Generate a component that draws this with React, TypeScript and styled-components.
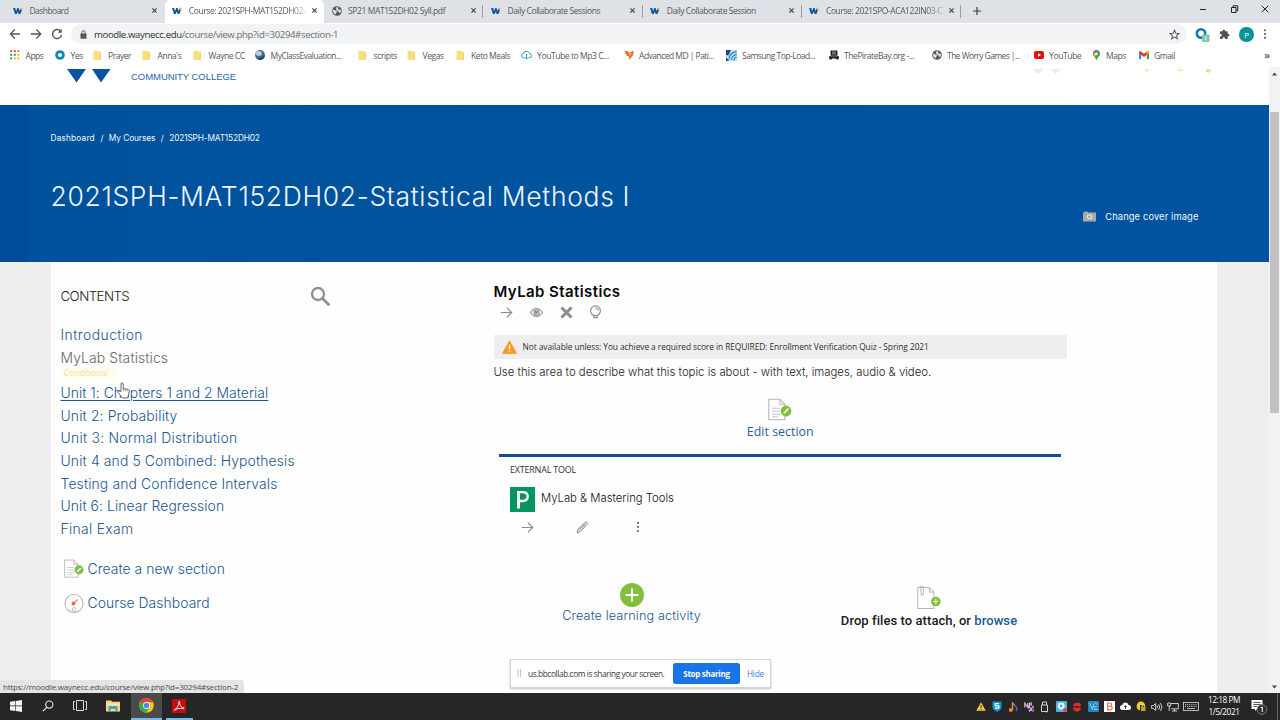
import React from 'react';
import styled, { createGlobalStyle, css } from 'styled-components';

const GlobalStyle = createGlobalStyle`
  * { box-sizing: border-box; }
  body { margin: 0; overflow: hidden; background: #fff; }
  svg { display: block; flex: none; }
`;

const ui = css`font-family: "Open Sans", "Noto Sans", sans-serif;`;
const geo = css`font-family: "Inter", sans-serif;`;

const Screen = styled.div`
  ${geo}
  position: relative;
  width: 1280px;
  height: 720px;
  display: flex;
  flex-direction: column;
  overflow: hidden;
  background: #fff;
`;

/* ---------- Browser chrome ---------- */

const TabStrip = styled.div`
  ${ui}
  display: flex;
  height: 22.5px;
  flex: none;
  padding-left: 5.5px;
  background: #dee1e6;
  font-size: 8.5px;
  color: #555a60;
`;

const Tab = styled.div<{ $active?: boolean; $divider?: boolean }>`
  position: relative;
  display: flex;
  align-items: center;
  width: 159.3px;
  flex: none;
  padding: 0 7.5px 1px 7.5px;
  background: ${p => (p.$active ? '#fff' : 'transparent')};
  border-radius: 5px 5px 0 0;
  &::after {
    content: '';
    position: absolute;
    right: 0;
    top: 5px;
    height: 13px;
    width: 1px;
    background: ${p => (p.$divider ? '#9a9da2' : 'transparent')};
  }
`;

const TabTitle = styled.span<{ $fade?: boolean; $spacing?: number }>`
  flex: 1;
  margin-left: 6.5px;
  white-space: nowrap;
  letter-spacing: ${p => p.$spacing ?? -0.42}px;
  ${p => p.$fade && css`
    mask-image: linear-gradient(90deg, #000 100px, rgba(0, 0, 0, 0.3) 117px);
  `}
`;

const NewTab = styled.div`
  display: flex;
  align-items: center;
  margin-left: 12px;
`;

const WindowControls = styled.div`
  display: flex;
  align-items: center;
  gap: 22.5px;
  height: 18px;
  margin-left: auto;
  padding-right: 11px;
`;

const Toolbar = styled.div`
  ${ui}
  display: flex;
  align-items: center;
  height: 23.5px;
  flex: none;
  padding: 0 13px 0 9px;
`;

const NavIcons = styled.div`
  display: flex;
  gap: 9px;
  margin-right: 8px;
`;

const AddressBar = styled.div`
  display: flex;
  align-items: center;
  width: 1116px;
  flex: none;
  height: 20px;
  padding: 0 7px 0 8px;
  border-radius: 10px;
  background: #f1f3f4;
`;

const Url = styled.span`
  flex: 1;
  margin-left: 6px;
  font-size: 9.6px;
  letter-spacing: -0.37px;
  color: #6b6f74;
  b { font-weight: 400; color: #2d3033; }
`;

const ToolbarActions = styled.div`
  display: flex;
  align-items: center;
  flex: 1;
  justify-content: space-between;
  padding-left: 8px;
`;

const Avatar = styled.div`
  display: grid;
  place-items: center;
  width: 14.5px;
  height: 14.5px;
  border-radius: 50%;
  background: #08939b;
  color: #fff;
  font-size: 8px;
`;

const Bookmarks = styled.div`
  ${ui}
  display: flex;
  align-items: center;
  height: 21px;
  flex: none;
  padding: 0 10px 2.5px;
  font-size: 8.5px;
  color: #53575c;
`;

const Bookmark = styled.div<{ $width: number; $spacing?: number }>`
  display: flex;
  align-items: center;
  gap: 5.6px;
  width: ${p => p.$width}px;
  flex: none;
  white-space: nowrap;
  letter-spacing: ${p => (p.$spacing ?? -0.22) - 0.25}px;
`;

const More = styled.span`
  margin-left: auto;
  font-size: 11px;
  line-height: 10px;
  font-weight: 600;
`;

/* ---------- Page ---------- */

const Viewport = styled.div`
  display: flex;
  flex: 1;
  min-height: 0;
`;

const Page = styled.div`
  display: flex;
  flex-direction: column;
  width: 1269px;
`;

const SiteHeader = styled.header`
  display: flex;
  justify-content: space-between;
  height: 38px;
  flex: none;
  padding: 2px 56px 0 67px;
`;

const Brand = styled.div`
  display: flex;
  gap: 21px;
  font-family: "Liberation Sans", sans-serif;
  font-size: 9.5px;
  line-height: 15px;
  letter-spacing: -0.05px;
  color: #2864a8;
`;

const Cover = styled.section`
  display: flex;
  flex-direction: column;
  height: 157px;
  flex: none;
  padding: 27px 70.5px 0 50.5px;
  background: linear-gradient(90deg, #004b9c 0, #004b9c 26px, #00529c 34px, #00549f 100%);
  color: #eef6ff;
`;

const Breadcrumb = styled.nav`
  display: flex;
  gap: 5.6px;
  font-size: 8.3px;
  line-height: 13px;
  letter-spacing: -0.15px;
`;

const Crumb = styled.span<{ $spacing?: number }>`
  letter-spacing: ${p => p.$spacing ?? -0.15}px;
`;

const Title = styled.h1`
  margin: 34px 0 0;
  font-size: 26.5px;
  line-height: 34px;
  font-weight: 300;
  letter-spacing: 0.66px;
`;

const ChangeCover = styled.div`
  display: flex;
  align-items: center;
  align-self: flex-end;
  gap: 9px;
  margin-top: -3px;
  line-height: 13px;
  font-size: 9.3px;
  letter-spacing: 0.14px;
`;

const Body = styled.div`
  display: flex;
  flex: 1;
  padding: 0 52px 0 50.5px;
  background: #eeeeef;
`;

const Sheet = styled.div`
  display: flex;
  flex: 1;
  background: #fefefe;
`;

const Sidebar = styled.aside`
  width: 443px;
  flex: none;
  padding: 23px 0 0 10px;
`;

const ContentsHead = styled.div`
  display: flex;
  align-items: center;
  justify-content: space-between;
  width: 270px;
  height: 22px;
  margin-bottom: 17px;
  font-size: 13.3px;
  letter-spacing: -0.56px;
  font-weight: 300;
  color: #222;
`;

const TocItem = styled.a<{ $tone?: 'muted'; $hover?: boolean; $spacing?: number }>`
  display: block;
  width: 250px;
  font-size: 13.9px;
  line-height: 22.7px;
  font-weight: 300;
  letter-spacing: ${p => p.$spacing ?? 0.05}px;
  color: ${p => (p.$tone === 'muted' ? '#666' : '#21578f')};
  text-decoration: ${p => (p.$hover ? 'underline' : 'none')};
  text-decoration-thickness: 1px;
  text-underline-offset: 2px;
`;

const Conditional = styled.span`
  display: block;
  width: 56px;
  margin: -1px 0 2.4px;
  padding-left: 3px;
  border-radius: 3px;
  background: #fffdf0;
  font-size: 8.4px;
  line-height: 11px;
  letter-spacing: 0;
  color: #f6e2a4;
`;

const SideAction = styled.a<{ $top: number }>`
  display: flex;
  align-items: center;
  gap: 4px;
  height: 22px;
  margin-top: ${p => p.$top}px;
  padding-left: 3px;
  font-size: 13.9px;
  font-weight: 300;
  letter-spacing: 0.06px;
  color: #21578f;
`;

const Main = styled.main`
  width: 573.5px;
  padding-top: 18.5px;
`;

const SectionTitle = styled.h2`
  margin: 0;
  font-size: 15px;
  line-height: 22px;
  font-weight: 600;
  letter-spacing: 0.41px;
  color: #0a0a0a;
`;

const SectionTools = styled.div`
  display: flex;
  align-items: center;
  gap: 16px;
  height: 19.5px;
  padding-left: 6px;
`;

const Notice = styled.div`
  ${ui}
  display: flex;
  align-items: center;
  gap: 6px;
  height: 24px;
  margin-top: 13px;
  padding: 0 0 1px 8px;
  background: #efeeef;
  font-size: 8.4px;
  letter-spacing: -0.075px;
  color: #2e2e2e;
`;

const Description = styled.p`
  margin: 5px 0 0;
  font-size: 11.4px;
  line-height: 16px;
  font-weight: 300;
  letter-spacing: -0.01px;
  color: #222;
`;

const EditSection = styled.a`
  ${ui}
  display: flex;
  flex-direction: column;
  align-items: center;
  margin-top: 17.5px;
  font-size: 12.4px;
  line-height: 18px;
  letter-spacing: 0.02px;
  color: #2a5d97;
  svg { margin-bottom: 1.5px; }
`;

const Activity = styled.article`
  height: 107px;
  margin: 13px 6px 0 5.5px;
  padding: 7px 0 0 11px;
  border-top: 3px solid #134f8e;
`;

const ActivityKind = styled.div`
  ${ui}
  font-size: 9px;
  line-height: 12px;
  letter-spacing: -0.22px;
  color: #333;
`;

const ActivityName = styled.div`
  display: flex;
  align-items: center;
  gap: 6px;
  height: 25px;
  margin-top: 11px;
  font-size: 11.3px;
  font-weight: 300;
  color: #111;
  span { margin-top: -3px; }
`;

const ActivityTools = styled.div`
  display: flex;
  gap: 42px;
  margin-top: 8.5px;
  padding-left: 11px;
`;

const DropRow = styled.div`
  display: flex;
  padding-top: 21.5px;
`;

const CreateActivity = styled.a`
  display: flex;
  flex-direction: column;
  align-items: center;
  width: 276px;
  flex: none;
  font-size: 12.7px;
  line-height: 17px;
  font-weight: 300;
  letter-spacing: 0.12px;
  color: #21578f;
`;

const DropFiles = styled.div`
  display: flex;
  flex-direction: column;
  align-items: center;
  width: 319px;
  flex: none;
  padding-top: 2.5px;
  font-family: Roboto, sans-serif;
  font-size: 13px;
  line-height: 18px;
  font-weight: 500;
  letter-spacing: 0.07px;
  color: #1a1a1a;
  white-space: nowrap;
  svg { margin-bottom: 2px; }
  a { color: #2257a0; }
`;

const Scrollbar = styled.div`
  display: flex;
  flex-direction: column;
  align-items: center;
  width: 11px;
  padding: 5px 0 4px;
  background: #f2f2f2;
`;

const Thumb = styled.div`
  width: 9px;
  height: 301px;
  margin: 36px 0 auto;
  background: #c1c1c1;
`;

/* ---------- Overlays ---------- */

const StatusBubble = styled.div`
  ${ui}
  position: absolute;
  left: 0;
  top: 680px;
  width: 244px;
  height: 13px;
  padding-left: 3px;
  background: #e3e4e5;
  border-top-right-radius: 3px;
  font-size: 8px;
  line-height: 13px;
  letter-spacing: -0.2px;
  color: #4a4d50;
  white-space: nowrap;
`;

const Pointer = styled.div`
  position: absolute;
  left: 117px;
  top: 382px;
`;

const ShareBar = styled.div`
  ${ui}
  position: absolute;
  left: 510px;
  top: 659px;
  width: 261px;
  height: 29px;
  display: flex;
  align-items: center;
  padding: 0 0 1px 6px;
  background: #fff;
  border: 1px solid #d4d5d6;
  box-shadow: 0 1px 2px rgba(0, 0, 0, 0.25);
  font-size: 8.3px;
  letter-spacing: -0.4px;
  color: #36393c;
  white-space: nowrap;
`;

const ShareText = styled.span`
  width: 145px;
  margin-left: 6px;
`;

const StopButton = styled.button`
  ${ui}
  width: 67px;
  height: 21px;
  padding: 0;
  border: 0;
  border-radius: 2.5px;
  background: #1a73e8;
  color: #fff;
  font-size: 8px;
  font-weight: 700;
  letter-spacing: -0.3px;
`;

const HideLink = styled.a`
  margin-left: 7px;
  letter-spacing: -0.25px;
  color: #3b7de0;
`;

/* ---------- Taskbar ---------- */

const Taskbar = styled.footer`
  ${ui}
  display: flex;
  height: 27px;
  flex: none;
  background: #262626;
  color: #fff;
`;

const TaskButton = styled.div<{ $width: number; $active?: boolean; $running?: boolean }>`
  display: grid;
  place-items: center;
  width: ${p => p.$width}px;
  background: ${p => (p.$active ? '#4a4a4a' : 'transparent')};
  border-bottom: 2px solid ${p => (p.$active || p.$running ? '#76b9ed' : 'transparent')};
`;

const TaskGap = styled.div`width: 3.5px;`;

const Tray = styled.div`
  display: flex;
  align-items: center;
  margin-left: auto;
`;

const TrayCell = styled.div<{ $width?: number }>`
  display: grid;
  place-items: center;
  width: ${p => p.$width ?? 16}px;
`;

const Clock = styled.div`
  width: 46px;
  padding: 0 0 2px;
  text-align: center;
  font-size: 8.3px;
  line-height: 12px;
  letter-spacing: -0.45px;
`;

const Peek = styled.div`
  width: 3px;
  height: 27px;
  margin-left: 6px;
  border-left: 1px solid #666;
`;

/* ---------- Icons ---------- */

const WFavicon = () => (
  <svg width="10" height="8" viewBox="0 0 10 8">
    <path d="M0 1h2.2l.9 3.2L4.2 1h1.4l1 3.2L7.2 2 9 3 7.4 7H5.7L4.8 4.4 3.7 7H2z" fill="#0b55a0" />
    <path d="M6.8.8H10L8.9 3.2 8 1.9z" fill="#f3b233" />
  </svg>
);

const Globe = () => (
  <svg width="10" height="10" viewBox="0 0 10 10">
    <circle cx="5" cy="5" r="4.8" fill="#54575b" />
    <path d="M1.3 3.2 3 4.4l1.6.3.4 1.2-1 1.2-.3 1.5L2 7.4 1 5zM4.6 1l2 .5L6 3l1.5.9 1.3-.4.2 2-1.3 2-.8-1.8-1.4-.6L4 3.4z" fill="#dfe2e6" />
  </svg>
);

const Close = () => (
  <svg width="5" height="5" viewBox="0 0 5 5"><path d="m.4.4 4.2 4.2m0-4.2L.4 4.6" stroke="#3e4144" strokeWidth="1.1" /></svg>
);

const Folder = () => (
  <svg width="10" height="10" viewBox="0 0 10 10">
    <path d="M.5.8h5.2v1H8v7.7H.5z" fill="#fbdf7d" /><path d="M6.700 3H8v6.500H.5v-.8h6.200z" fill="#f4d264" />
  </svg>
);

const Arrow = ({ size = 13, color = '#8c8c8c', flip = false, weight = 1.2 }) => (
  <svg width={size} height={size} viewBox="0 0 13 13" fill="none" stroke={color} strokeWidth={weight}>
    <path d={flip ? 'M12 6.5H1.5M6.3 1.7 1.5 6.5l4.8 4.8' : 'M.7 6.5h11M6.9 1.7l4.8 4.8-4.8 4.8'} />
  </svg>
);

const PageEdit = ({ size = 24 }: { size?: number }) => (
  <svg width={size} height={size} viewBox="0 0 24 24" fill="none">
    <path d="M.8 1.2h11l5 5v15.6H.8z" fill="#fff" stroke="#b5b7b9" strokeWidth="1.1" />
    <path d="M11.8 1.2v5h5" stroke="#b5b7b9" strokeWidth="1.1" />
    <path d="M4 10.2h8M4 13.2h8M4 16.2h8M4 18.8h6" stroke="#c3c5c7" />
    <circle cx="18" cy="13" r="5.4" fill="#7fc043" />
    <path d="m15.3 15.9.6-2 3.8-3.8 1.3 1.3-3.8 3.8z" fill="#e9f6dc" />
  </svg>
);

const Dots = ({ color = '#777', height = 11 }) => (
  <svg width="4" height={height} viewBox="0 0 4 11" fill={color}>
    <circle cx="2" cy="1.4" r="1.15" /><circle cx="2" cy="5.5" r="1.15" /><circle cx="2" cy="9.6" r="1.15" />
  </svg>
);

const bookmarks: { label: string; width: number; spacing?: number; icon: React.ReactNode }[] = [
  { label: 'Apps', width: 45, spacing: -0.3, icon: (
    <svg width="10" height="10" viewBox="0 0 10 10">
      {[['#ea4335', '#ea4335', '#e07b2f'], ['#34a853', '#4285f4', '#f3b12c'], ['#34a853', '#f3b12c', '#f3b12c']].map((r, y) =>
        r.map((c, x) => <rect key={`${x}${y}`} x={x * 3.6 + 0.2} y={y * 3.6 + 0.2} width="2" height="2" fill={c} />))}
    </svg>) },
  { label: 'Yes', width: 37.5, icon: <svg width="10" height="10" viewBox="0 0 10 10"><circle cx="5" cy="5" r="3.4" fill="none" stroke="#1384b6" strokeWidth="2.8" /></svg> },
  { label: 'Prayer', width: 49.5, icon: <Folder /> },
  { label: "Anna's", width: 51, icon: <Folder /> },
  { label: 'Wayne CC', width: 62, icon: <Folder /> },
  { label: 'MyClassEvaluation...', width: 103, icon: (
    <svg width="10" height="10" viewBox="0 0 10 10"><circle cx="5" cy="5" r="4.9" fill="#46698f" /><ellipse cx="3.8" cy="3.4" rx="3" ry="2.4" fill="#b8cde2" /><path d="M5 9.9A4.9 4.9 0 0 0 9.9 5C8 7 6 8 2 8.8A5 5 0 0 0 5 9.9" fill="#223e66" /></svg>) },
  { label: 'scripts', width: 49, spacing: -0.12, icon: <Folder /> },
  { label: 'Vegas', width: 48.5, icon: <Folder /> },
  { label: 'Keto Meals', width: 65, icon: <Folder /> },
  { label: 'YouTube to Mp3 C...', width: 103, spacing: -0.16, icon: (
    <svg width="11" height="10" viewBox="0 0 11 10" fill="none" stroke="#2e9ac4" strokeWidth="1"><path d="M3.5 7.8H2.6A2 2 0 0 1 2 3.9a3.4 3.4 0 0 1 6.5-.3 2.1 2.1 0 0 1-.1 4.2h-1M5.5 4v5M4 7.5 5.5 9 7 7.5" /></svg>) },
  { label: 'Advanced MD | Pati...', width: 102, spacing: -0.28, icon: (
    <svg width="10" height="10" viewBox="0 0 10 10"><path d="M0 .5 4.2 1.500l1 1.200L9.800.5 9 5.200 5.200 9.800 4.900 6.500 1.800 5.200l1-.8L.5 3.300l1.300-.5z" fill="#ef6a2c" /><path d="m4.500 3.800 2.500-.4-1.500 2" stroke="#fff" strokeWidth=".5" fill="none" /></svg>) },
  { label: 'Samsung Top-Load...', width: 103, spacing: -0.26, icon: (
    <svg width="11" height="11" viewBox="0 0 11 11"><rect width="11" height="11" fill="#c6dff1" /><path d="M0 0h5L2.5 5.3H0zM0 7l3 4H0z" fill="#1c4a80" /><path d="M3 9.5C3 5 5.500 2.500 10.500 1.500M5.400 10C5.700 6.800 7.500 5 10.700 4.300M8 10.500c.1-2 1-3 2.700-3.500" fill="none" stroke="#2c8fc8" strokeWidth="1.300" /></svg>) },
  { label: 'ThePirateBay.org -...', width: 103, spacing: -0.2, icon: (
    <svg width="10" height="10" viewBox="0 0 10 10" fill="#1c1c1c"><path d="M1.600.5h6.800v5.200H1.600zM0 6.300h10v1.200L9.300 9.500H7.500L7 8.400H3L2.500 9.500H.7L0 7.500z" /><path d="M3 2h4M3 3.800h4" stroke="#fff" strokeWidth=".6" /></svg>) },
  { label: 'The Worry Games |...', width: 102, spacing: -0.33, icon: <Globe /> },
  { label: 'YouTube', width: 58, spacing: -0.16, icon: (
    <svg width="10" height="8" viewBox="0 0 10 8"><rect width="10" height="8" rx="2" fill="#e3120b" /><path d="m4 2.200 3 1.800-3 1.800z" fill="#fff" /></svg>) },
  { label: 'Maps', width: 47, icon: (
    <svg width="9" height="11" viewBox="0 0 9 11"><path d="M4.500.2A3.500 3.500 0 0 0 1 3.700C1 6.300 3.800 7 4.500 10.800 5.200 7 8 6.300 8 3.700A3.500 3.500 0 0 0 4.500.2" fill="#34a853" /><path d="M1.300 5 6.800 1A3.500 3.500 0 0 0 1 3.700z" fill="#4285f4" /><path d="M1.300 5 3 6.800 5.500 4 3 2z" fill="#fbbc04" /><path d="M1.700 1.600 3.300 3 5.500.4a3.500 3.500 0 0 0-3.800 1.200" fill="#ea4335" /><circle cx="4.500" cy="3.700" r="1.200" fill="#fff" /></svg>) },
  { label: 'Gmail', width: 36, icon: (
    <svg width="10" height="8" viewBox="0 0 10 8"><path d="M0 1.500V8h2.200V3.200z" fill="#4285f4" /><path d="M10 1.500V8H7.800V3.200z" fill="#34a853" /><path d="M0 1.300C0 .2 1.200-.2 2 .5l3 2.300L8 .5c.8-.7 2-.3 2 .8v1L5 5.900 0 2.300z" fill="#e0392c" /><path d="M7.800 3.800 10 2.300V1.300C10 .2 8.800-.2 8 .5l-.2.200z" fill="#fbbc04" /></svg>) },
];

const tabs: { title: string; active?: boolean; divider?: boolean; fade?: boolean; globe?: boolean; spacing?: number }[] = [
  { title: 'Dashboard', spacing: -0.55 },
  { title: 'Course: 2021SPH-MAT152DH02-', active: true, fade: true },
  { title: 'SP21 MAT152DH02 Syll.pdf', globe: true, divider: true },
  { title: 'Daily Collaborate Sessions', divider: true },
  { title: 'Daily Collaborate Session', divider: true },
  { title: 'Course: 2021SPO-ACA122IN03-C', divider: true, fade: true },
];

const toc: { title: string; hover?: boolean; spacing?: number }[] = [
  { title: 'Unit 1: Chapters 1 and 2 Material', hover: true, spacing: 0.03 },
  { title: 'Unit 2: Probability', spacing: 0.15 },
  { title: 'Unit 3: Normal Distribution', spacing: 0.26 },
  { title: 'Unit 4 and 5 Combined: Hypothesis Testing and Confidence Intervals', spacing: 0.14 },
  { title: 'Unit 6: Linear Regression', spacing: 0.08 },
  { title: 'Final Exam', spacing: 0.32 },
];

const trayIcons: React.ReactNode[] = [
  <svg width="10" height="9" viewBox="0 0 10 9"><path d="m5 .3 4.800 8.500H.2z" fill="#f4c445" /><path d="M5 3v3M5 7v1" stroke="#40320b" strokeWidth="1" /></svg>,
  <svg width="10" height="11" viewBox="0 0 10 11"><path d="M.5.500h9V6c0 2.500-2 4-4.500 4.800C2.500 10 .5 8.500.5 6z" fill="#1593cf" /><path d="M7 2.700H3.300v2.200h3.500v2.300H3" fill="none" stroke="#fff" strokeWidth="1.200" /></svg>,
  <svg width="10" height="10" viewBox="0 0 10 10" fill="none"><path d="M4.500 8V1l2 2" stroke="#ee8425" strokeWidth="1.500" /><circle cx="2.800" cy="8" r="2" fill="#ee8425" /><path d="M6 3.500c3 1 3.500 3 2 5.500" stroke="#3c6ed0" strokeWidth="1.500" /></svg>,
  <svg width="11" height="10" viewBox="0 0 11 10" fill="none"><path d="M.8 5.500V1l3 4.500V1M5.500 5.500V1h1.800v2H5.500M4 4l5.500 5.500M9.500 4 5 9.500" stroke="#d9b2dd" strokeWidth="1.200" /><path d="M7.500 5.500 10.300 9M10 5.500 8 9" stroke="#a3429e" strokeWidth="1.200" /></svg>,
  <svg width="10" height="12" viewBox="0 0 10 12" fill="none" stroke="#d0d0d0"><path d="M2.500 4V1h4v3M1.500 4h6v6.500h-6zM8 9l-1.500 2.500" /></svg>,
  <svg width="11" height="11" viewBox="0 0 11 11"><rect width="11" height="11" rx="1" fill="#4bb4e6" /><circle cx="5.200" cy="5" r="3.400" fill="#e9f7ff" /><circle cx="5.200" cy="5" r="1.300" fill="#3a9fd5" /><circle cx="9" cy="9" r="2" fill="#e04550" /></svg>,
  <svg width="10" height="10" viewBox="0 0 10 10"><path d="M1 2.500C3 .3 7 .2 9 2.200L8 4.800H2zM.8 5.500h8.400L8 8.500 5 9.800 2 8.500z" fill="#dd2f25" /><path d="M3 4h4v1.500H3z" fill="#6e130d" /></svg>,
  <svg width="11" height="11" viewBox="0 0 11 11"><rect width="11" height="11" rx="1" fill="#2487c2" /><path d="m1.500 2 3 6.500L6 2.500M6 6h3M6 8.500h3.500M7 1.500l2.500 2" stroke="#9cd6f5" fill="none" /></svg>,
  <svg width="11" height="11" viewBox="0 0 11 11"><rect width="11" height="11" fill="#fff" /><path d="M3.700 2h2.300a1.600 1.600 0 0 1 0 3.300H3.700zm0 3.300h2.700a1.800 1.800 0 0 1 0 3.600H3.700z" fill="none" stroke="#ec6a3c" strokeWidth="1.100" /></svg>,
  <svg width="11" height="9" viewBox="0 0 11 9"><path d="M2.700 8A2.500 2.500 0 0 1 2.300 3 3.200 3.200 0 0 1 8.500 3a2.500 2.500 0 0 1 0 5z" fill="#fff" /><path d="M5.500 7V4M4.200 5 5.500 3.700 6.800 5" stroke="#262626" fill="none" strokeWidth=".9" /></svg>,
  <svg width="10" height="11" viewBox="0 0 10 11"><path d="M5 .5A4.300 4.300 0 0 1 9 4H4v5.500A4.600 4.600 0 0 1 5 .5" fill="#f2cd1f" /><path d="M5 .5A4.600 4.600 0 0 0 4 9.500l-1.500-1A4.500 4.500 0 0 1 5 .5" fill="#f2cd1f" /><rect x="5" y="5.500" width="4.500" height="4.500" fill="#c7a90f" /><path d="M6 5.500V4h2.500v1.500" stroke="#ddd" fill="none" /></svg>,
  <svg width="12" height="10" viewBox="0 0 12 10" fill="none" stroke="#ddd" strokeWidth=".9"><path d="M.6 3.600h1.700L4.600 1.500v7L2.300 6.400H.6zM6 3.500q1 1.500 0 3M7.700 2.300q2 2.700 0 5.400M9.500 1q3 4 0 8" /></svg>,
  <svg width="12" height="10" viewBox="0 0 12 10" fill="none" stroke="#ddd" strokeWidth=".9"><path d="M4 1.500h7.300v5.300H4M7.500 7v2M5 9h5M.7 1h3v3h-3zM2.200 4v5" /></svg>,
];

const AppTray = () => (
  <Tray>
    {trayIcons.map((icon, i) => <TrayCell key={i}>{icon}</TrayCell>)}
    <TrayCell $width={20}>
      <svg width="16" height="9" viewBox="0 0 16 9" fill="none" stroke="#ddd" strokeWidth=".8"><rect x=".5" y=".5" width="15" height="8" /><path d="M2 2.700h12M2 4.500h12" strokeDasharray="1.100 .8" /><path d="M4 6.500h8" /></svg>
    </TrayCell>
    <Clock>12:18 PM<br />1/5/2021</Clock>
    <TrayCell $width={24}>
      <svg width="17" height="17" viewBox="0 0 17 17">
        <path d="M.5 2h11v9H6.200L4 13v-2H.5z" fill="#fff" /><path d="M2.300 4.500h7.400M2.300 6.500h7.400M2.300 8.500h4" stroke="#262626" strokeWidth=".8" />
        <circle cx="11" cy="11.500" r="4.900" fill="#2e2e2e" stroke="#8b8b8b" strokeWidth=".8" /><path d="m9.700 9.900 1.600-.9v5" stroke="#fff" fill="none" />
      </svg>
    </TrayCell>
    <Peek />
  </Tray>
);

export default function App() {
  return (
    <Screen>
      <GlobalStyle />
      <TabStrip>
        {tabs.map((t, i) => (
          <Tab key={i} $active={t.active} $divider={t.divider}>
            {t.globe ? <Globe /> : <WFavicon />}
            <TabTitle $fade={t.fade} $spacing={t.spacing}>{t.title}</TabTitle>
            <Close />
          </Tab>
        ))}
        <NewTab><svg width="8" height="8" viewBox="0 0 8 8"><path d="M4 0v8M0 4h8" stroke="#3e4144" strokeWidth="1.200" /></svg></NewTab>
        <WindowControls>
          <svg width="8" height="8" viewBox="0 0 8 8"><path d="M1 4.500h6" stroke="#222" /></svg>
          <svg width="9" height="8" viewBox="0 0 9 8" fill="none" stroke="#222"><path d="M1.500 2.500h4.500v5H1.500zM3 2.500V.800h4.700v5H6" /></svg>
          <svg width="8" height="8" viewBox="0 0 8 8"><path d="m.7.7 6.600 6.600m0-6.600L.7 7.300" stroke="#222" /></svg>
        </WindowControls>
      </TabStrip>

      <Toolbar>
        <NavIcons>
          <Arrow size={12} color="#55585c" flip weight={1.4} />
          <Arrow size={12} color="#55585c" weight={1.4} />
          <svg width="12" height="12" viewBox="0 0 12 12" fill="none"><path d="M9.600 3.200A4.500 4.500 0 1 0 10.500 7" stroke="#55585c" strokeWidth="1.400" /><path d="M10.700.8v4H6.700z" fill="#55585c" /></svg>
        </NavIcons>
        <AddressBar>
          <svg width="9" height="9" viewBox="0 0 9 9"><rect x="1.500" y="3.600" width="6" height="5.200" rx=".6" fill="#55585c" /><path d="M2.800 4V2.500a1.700 1.700 0 0 1 3.400 0V4" stroke="#55585c" fill="none" /></svg>
          <Url><b>moodle.waynecc.edu</b>/course/view.php?id=30294#section-1</Url>
          <svg width="11" height="11" viewBox="0 0 24 24" fill="none" stroke="#55585c" strokeWidth="2.200"><path d="m12 2.500 2.900 6.600 7.100.6-5.400 4.700 1.600 7L12 17.700l-6.200 3.700 1.600-7L2 9.700l7.100-.6z" /></svg>
        </AddressBar>
        <ToolbarActions>
          <svg width="15" height="15" viewBox="0 0 15 15"><circle cx="6" cy="6.500" r="4.200" fill="none" stroke="#1878ae" strokeWidth="2.600" /><rect x="7" y="7.500" width="7.500" height="7.500" rx="1" fill="#7ccaa5" /><path d="M10.800 9v4.500" stroke="#e8fff4" /></svg>
          <svg width="11" height="11" viewBox="0 0 24 24" fill="#4f5256"><path d="M20.500 11H19V7a2 2 0 0 0-2-2h-4V3.500a2.500 2.500 0 0 0-5 0V5H4a2 2 0 0 0-2 2v3.800h1.500a2.700 2.700 0 0 1 0 5.400H2V20a2 2 0 0 0 2 2h3.800v-1.500a2.700 2.700 0 0 1 5.400 0V22H17a2 2 0 0 0 2-2v-4h1.500a2.500 2.500 0 0 0 0-5" /></svg>
          <Avatar>P</Avatar>
          <Dots color="#55585c" height={10} />
        </ToolbarActions>
      </Toolbar>

      <Bookmarks>
        {bookmarks.map(b => (
          <Bookmark key={b.label} $width={b.width} $spacing={b.spacing}>{b.icon}<span>{b.label}</span></Bookmark>
        ))}
        <More>»</More>
      </Bookmarks>

      <Viewport>
        <Page>
          <SiteHeader>
            <Brand>
              <svg width="43" height="14" viewBox="0 0 43 14" fill="#0a549f"><path d="M0 0h19L9.500 13.500zM25 0h18.500L34 13.500z" /></svg>
              COMMUNITY COLLEGE
            </Brand>
            <svg width="180" height="6" viewBox="0 0 180 6">
              <path d="M0 0h11L5.500 5zM17 0h11l-5.500 5z" fill="#ededee" />
              <path d="m112 1 5-1-4 3zM146 0l5 2h-5zM173 0h5l-2 4-3-1z" fill="#f5dc8a" />
            </svg>
          </SiteHeader>

          <Cover>
            <Breadcrumb>
              <Crumb $spacing={0.17}>Dashboard</Crumb><span>/</span>
              <Crumb $spacing={-0.08}>My Courses</Crumb><span>/</span>
              <Crumb>2021SPH-MAT152DH02</Crumb>
            </Breadcrumb>
            <Title>2021SPH-MAT152DH02-Statistical Methods I</Title>
            <ChangeCover>
              <svg width="13" height="11" viewBox="0 0 13 11"><path d="M0 1.500h1L1.500.500h3l.5 1h8v9H0z" fill="#a9a9a6" /><circle cx="6.500" cy="5.800" r="2.100" fill="none" stroke="#e8e8e8" strokeWidth="1.100" /></svg>
              Change cover image
            </ChangeCover>
          </Cover>

          <Body>
            <Sheet>
              <Sidebar>
                <ContentsHead>
                  CONTENTS
                  <svg width="21" height="21" viewBox="0 0 21 21" fill="none" stroke="#8f8f8f"><circle cx="8" cy="8" r="6" strokeWidth="2.300" /><path d="m12.300 12.300 7 7" strokeWidth="2.800" /></svg>
                </ContentsHead>
                <TocItem $spacing={0.45}>Introduction</TocItem>
                <TocItem $tone="muted" $spacing={0.13}>MyLab Statistics</TocItem>
                <Conditional>Conditional</Conditional>
                {toc.map(t => <TocItem key={t.title} $hover={t.hover} $spacing={t.spacing}>{t.title}</TocItem>)}
                <SideAction $top={17.5}><PageEdit size={20} />Create a new section</SideAction>
                <SideAction $top={12}>
                  <svg width="20" height="20" viewBox="0 0 20 20" fill="none"><circle cx="10" cy="10.500" r="9" stroke="#bdb9b7" strokeWidth="1.100" /><path d="m9.500 10.500 4.500-4" stroke="#ef8a55" strokeWidth="1.200" /><circle cx="9.500" cy="10.500" r="1.900" fill="#ea6937" /><circle cx="10" cy="16.500" r="1.800" stroke="#bdb9b7" /></svg>
                  Course Dashboard
                </SideAction>
              </Sidebar>

              <Main>
                <SectionTitle>MyLab Statistics</SectionTitle>
                <SectionTools>
                  <Arrow />
                  <svg width="15" height="13" viewBox="0 0 15 13" fill="none" stroke="#8c8c8c" strokeWidth="1.200"><path d="M1.500 6.500Q7.500-1.500 13.500 6.500 7.500 14.500 1.500 6.500z" /><circle cx="7.500" cy="6.500" r="2.500" /><circle cx="7.300" cy="6.300" r="1" fill="#8c8c8c" /></svg>
                  <svg width="13" height="13" viewBox="0 0 13 13"><path d="m1.500 1.500 10 10m0-10-10 10" stroke="#8c8c8c" strokeWidth="3" /></svg>
                  <svg width="13" height="14" viewBox="0 0 13 14" fill="none" stroke="#8f8f8f" strokeWidth="1.200"><circle cx="6.500" cy="5.800" r="4.900" /><path d="M4.800 10.500v2.200h3.400v-2.200M6.500 3q2.300.2 2.500 2.500" /></svg>
                </SectionTools>
                <Notice>
                  <svg width="15" height="14" viewBox="0 0 15 14"><path d="M7.500.8 14.600 13.500H.4z" fill="#f59d1e" stroke="#f59d1e" strokeWidth=".8" strokeLinejoin="round" /><path d="M7.500 4.800v4.400M7.500 10.500v1.500" stroke="#fff" strokeWidth="1.200" /></svg>
                  Not available unless: You achieve a required score in REQUIRED: Enrollment Verification Quiz - Spring 2021
                </Notice>
                <Description>Use this area to describe what this topic is about - with text, images, audio &amp; video.</Description>
                <EditSection><PageEdit />Edit section</EditSection>
                <Activity>
                  <ActivityKind>EXTERNAL TOOL</ActivityKind>
                  <ActivityName>
                    <svg width="25" height="25" viewBox="0 0 25 25"><rect width="25" height="25" fill="#06945f" /><path d="M8.500 4v17.500" stroke="#fff" strokeWidth="3" /><path d="M7 5.200h5.500c3.300 0 5.200 1.500 5.200 4.200 0 3-2.300 4.600-5.700 4.600H9" fill="none" stroke="#fff" strokeWidth="2.300" /></svg>
                    <span>MyLab &amp; Mastering Tools</span>
                  </ActivityName>
                  <ActivityTools>
                    <Arrow />
                    <svg width="13" height="13" viewBox="0 0 13 13" fill="none" stroke="#8a8a8a" strokeWidth=".9"><path d="m1 12 1-3.800L9.300 1q1.700-.5 2.500 1.500L4.700 10.500z" fill="#ddd" /><path d="m3.500 8.700 6-6" /></svg>
                    <TrayCell $width={13}><Dots height={12} /></TrayCell>
                  </ActivityTools>
                </Activity>
                <DropRow>
                  <CreateActivity>
                    <svg width="24" height="24" viewBox="0 0 24 24"><circle cx="12" cy="12" r="12" fill="#81bf3c" /><path d="M12 5.500v13M5.500 12h13" stroke="#fff" strokeWidth="2.100" /></svg>
                    Create learning activity
                  </CreateActivity>
                  <DropFiles>
                    <svg width="24" height="25" viewBox="0 0 24 25" fill="none" stroke="#b4b4b4"><path d="M.800 2.500h11.500l4.500 4.500v16.500h-16zM12.300 2.500V7h4.500" fill="#fff" /><path d="M3.300 4V1.800q1.500-1.500 3 0V10H4V4" /><circle cx="18.800" cy="16.500" r="4.800" fill="#81bf3c" stroke="none" /><path d="M18.800 13.800v5.400M16.100 16.500h5.400" stroke="#eef8e2" strokeWidth="1.100" /></svg>
                    <span>Drop files to attach, or <a>browse</a></span>
                  </DropFiles>
                </DropRow>
              </Main>
            </Sheet>
          </Body>
        </Page>
        <Scrollbar>
          <svg width="5" height="4" viewBox="0 0 5 4"><path d="M0 3.500h5L2.500.5z" fill="#444" /></svg>
          <Thumb />
          <svg width="5" height="4" viewBox="0 0 5 4"><path d="M0 .5h5L2.500 3.500z" fill="#444" /></svg>
        </Scrollbar>
      </Viewport>

      <Taskbar>
        <TaskButton $width={31}><svg width="12" height="12" viewBox="0 0 12 12" fill="#f4f4f4"><path d="M0 1.700 5.200 1v4.600H0zM5.800.9 12 0v5.600H5.800zM0 6.300h5.200V11L0 10.300zM5.800 6.300H12V12l-6.200-.9z" /></svg></TaskButton>
        <TaskButton $width={34}><svg width="12" height="12" viewBox="0 0 12 12" fill="none" stroke="#eee" strokeWidth="1.100"><circle cx="7.300" cy="4.600" r="3.600" /><path d="M4.700 7.300.8 11.200" /></svg></TaskButton>
        <TaskButton $width={30}><svg width="14" height="11" viewBox="0 0 14 11" fill="none" stroke="#ddd"><path d="M3.500.5h7v10h-7zM2 1.500H.5v8H2M12 1.500h1.500v8H12" /></svg></TaskButton>
        <TaskButton $width={36}><svg width="14" height="12" viewBox="0 0 14 12"><path d="M0 .5h5l1 1.300h8V11.500H0z" fill="#f8d775" /><path d="M0 3.500h14v2H0z" fill="#fbe79f" /><path d="M2.500 6h9v5.500h-2V9h-5v2.500h-2z" fill="#3d9fd6" /></svg></TaskButton>
        <TaskButton $width={31} $active>
          <svg width="15" height="15" viewBox="0 0 16 16"><circle cx="8" cy="8" r="7.800" fill="#f5c518" /><path d="M8 8 1.200 4.100A7.800 7.800 0 0 0 7.500 15.800L11.300 10z" fill="#38a853" /><path d="M8 8 1.200 4.100a7.800 7.800 0 0 1 13.600.300H8z" fill="#dc4437" /><circle cx="8" cy="8" r="3.700" fill="#fff" /><circle cx="8" cy="8" r="2.900" fill="#4387f0" /></svg>
        </TaskButton>
        <TaskGap />
        <TaskButton $width={27} $running><svg width="14" height="14" viewBox="0 0 14 14"><rect width="14" height="14" rx="1" fill="#c60c0c" /><path d="M2.500 11C5 9.500 7 6 6.800 3c0-1.200 1-.8.8.3-.5 2.200 1.700 5 4 5.600 1 .3.500 1-.6.700-2.500-.7-5.500-.3-8 1.200-.7.700-.9.700-.5.200z" fill="none" stroke="#fff" strokeWidth=".9" /></svg></TaskButton>
        <AppTray />
      </Taskbar>

      <StatusBubble>https://moodle.waynecc.edu/course/view.php?id=30294#section-2</StatusBubble>
      <ShareBar>
        <svg width="5" height="8" viewBox="0 0 5 8"><path d="M1 0v8M3.500 0v8" stroke="#bbb" strokeWidth=".9" /></svg>
        <ShareText>us.bbcollab.com is sharing your screen.</ShareText>
        <StopButton>Stop sharing</StopButton>
        <HideLink>Hide</HideLink>
      </ShareBar>
      <Pointer>
        <svg width="13" height="17" viewBox="0 0 13 17"><path d="M4 9.500V2a1.100 1.100 0 0 1 2.200 0v4.500l5 1q1.200.4 1.100 1.700L11.500 13l-1 3H5.500L1 10.500Q.8 9 2.200 9z" fill="#fff" stroke="#555" strokeWidth=".9" /><path d="M6.200 6.500v3M8.200 7v2.500M10.200 7.500v2" stroke="#777" strokeWidth=".7" /></svg>
      </Pointer>
    </Screen>
  );
}
